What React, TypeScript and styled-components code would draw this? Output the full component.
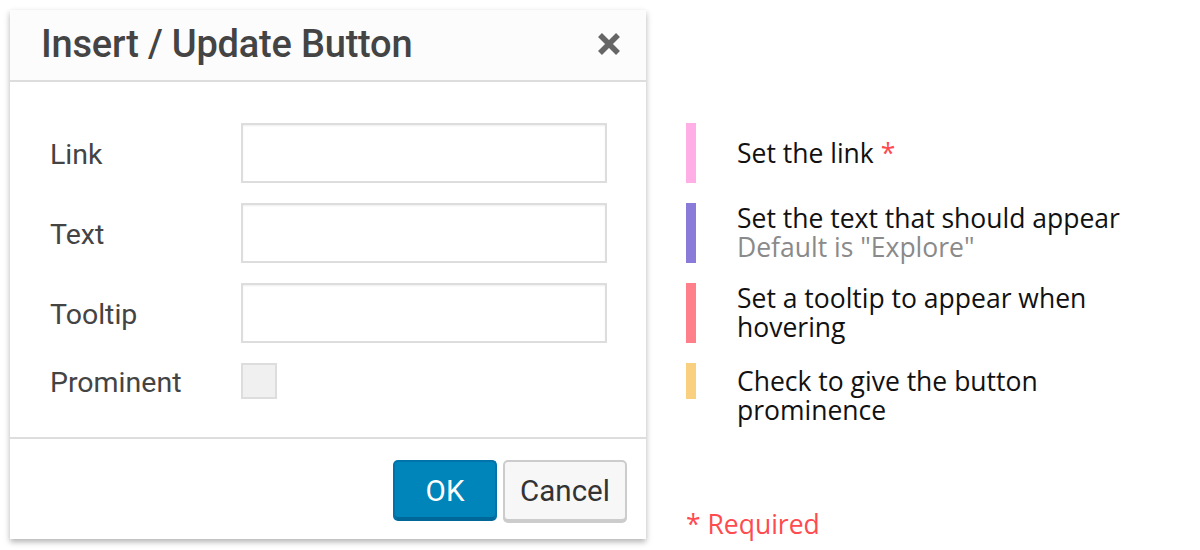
import React from 'react';
import styled, { createGlobalStyle } from 'styled-components';

const GlobalStyle = createGlobalStyle`
  html, body {
    margin: 0;
    padding: 0;
    background: #ffffff;
  }
  * {
    box-sizing: border-box;
  }
`;

const COLORS = {
  text: '#444444',
  border: '#dddddd',
  blue: '#0085ba',
  red: '#ff4a4f',
};

interface FieldSpec {
  label: string;
  kind: 'text' | 'check';
}

interface NoteSpec {
  color: string;
  height: number;
  lines: string[];
  sub?: string;
  required?: boolean;
  top?: boolean;
}

const FIELDS: FieldSpec[] = [
  { label: 'Link', kind: 'text' },
  { label: 'Text', kind: 'text' },
  { label: 'Tooltip', kind: 'text' },
  { label: 'Prominent', kind: 'check' },
];

const NOTES: NoteSpec[] = [
  { color: '#ffaee6', height: 60, lines: ['Set the link'], required: true },
  { color: '#8b7bd8', height: 60, lines: ['Set the text that should appear'], sub: 'Default is "Explore"' },
  { color: '#ff7f8a', height: 60, lines: ['Set a tooltip to appear when', 'hovering'] },
  { color: '#f9d07f', height: 36, lines: ['Check to give the button', 'prominence'], top: true },
];

const CloseIcon = () => (
  <svg width="26" height="26" viewBox="0 0 26 26">
    <path d="M4 4 L22 22 M22 4 L4 22" stroke="#666" strokeWidth="5.5" strokeLinecap="butt" />
  </svg>
);

const App = () => (
  <Page>
    <GlobalStyle />
    <Dialog>
      <Header>
        <Title>Insert / Update Button</Title>
        <Close>
          <CloseIcon />
        </Close>
      </Header>
      <Body>
        {FIELDS.map((f) => (
          <FieldRow key={f.label} $short={f.kind === 'check'}>
            <Label>{f.label}</Label>
            {f.kind === 'text' ? <TextInput type="text" /> : <CheckBox />}
          </FieldRow>
        ))}
      </Body>
      <Footer>
        <PrimaryButton>OK</PrimaryButton>
        <SecondaryButton>Cancel</SecondaryButton>
      </Footer>
    </Dialog>

    <Notes>
      <NoteList>
        {NOTES.map((n) => (
          <NoteRow key={n.color} $top={n.top} $height={n.height}>
            <Bar $color={n.color} $height={n.height} />
            <NoteText $top={n.top}>
              {n.lines.map((l, i) => (
                <div key={i}>
                  {l}
                  {n.required && i === n.lines.length - 1 && <Star> *</Star>}
                </div>
              ))}
              {n.sub && <SubText>{n.sub}</SubText>}
            </NoteText>
          </NoteRow>
        ))}
      </NoteList>
      <Required>* Required</Required>
    </Notes>
  </Page>
);

export default App;

const Page = styled.div`
  width: 1200px;
  height: 550px;
  padding: 10px 0 0 10px;
  display: flex;
  align-items: flex-start;
  gap: 40px;
  overflow: hidden;
`;

const Dialog = styled.div`
  width: 636px;
  height: 529px;
  background: #ffffff;
  box-shadow: 0 3px 6px rgba(0, 0, 0, 0.3);
  display: flex;
  flex-direction: column;
`;

const Header = styled.div`
  height: 72px;
  flex-shrink: 0;
  background: #fcfcfc;
  border-bottom: 2px solid ${COLORS.border};
  display: flex;
  align-items: center;
  justify-content: space-between;
  padding: 0 24px 0 31px;
`;

const Title = styled.div`
  font-family: Roboto, 'Liberation Sans', sans-serif;
  font-weight: 500;
  font-size: 38px;
  color: ${COLORS.text};
  letter-spacing: -0.2px;
  margin-top: -2px;
`;

const Close = styled.div`
  display: flex;
  align-items: center;
  justify-content: center;
  width: 26px;
  height: 26px;
  margin-top: -2px;
  cursor: pointer;
`;

const Body = styled.div`
  flex: 1;
  padding: 41px 39px 0 40px;
  display: flex;
  flex-direction: column;
  gap: 20px;
  border-bottom: 2px solid ${COLORS.border};
`;

const FieldRow = styled.div<{ $short?: boolean }>`
  display: flex;
  align-items: center;
  height: ${(p) => (p.$short ? 36 : 60)}px;
`;

const Label = styled.div`
  width: 191px;
  padding-top: 3px;
  font-family: Roboto, 'Liberation Sans', sans-serif;
  font-size: 28.5px;
  color: ${COLORS.text};
`;

const TextInput = styled.input`
  width: 366px;
  height: 60px;
  border: 2px solid ${COLORS.border};
  box-shadow: inset 0 1px 2px rgba(0, 0, 0, 0.07);
  background: #ffffff;
  outline: none;
  padding: 0 12px;
  font-size: 24px;
`;

const CheckBox = styled.div`
  width: 36px;
  height: 36px;
  border: 2px solid ${COLORS.border};
  background: #f0f0f0;
`;

const Footer = styled.div`
  height: 100px;
  flex-shrink: 0;
  display: flex;
  justify-content: flex-end;
  align-items: flex-start;
  gap: 6px;
  padding: 21px 19px 0 0;
`;

const buttonBase = `
  height: 61px;
  border-radius: 5px;
  font-family: Roboto, 'Liberation Sans', sans-serif;
  font-size: 29.5px;
  display: flex;
  align-items: center;
  justify-content: center;
  cursor: pointer;
`;

const PrimaryButton = styled.div`
  ${buttonBase}
  width: 104px;
  background: ${COLORS.blue};
  border: 2px solid #0073aa;
  border-bottom-color: #006799;
  box-shadow: inset 0 -2px 0 #006799;
  color: #ffffff;
`;

const SecondaryButton = styled.div`
  ${buttonBase}
  width: 124px;
  background: #f7f7f7;
  border: 2px solid #cccccc;
  box-shadow: 0 2px 0 #cccccc;
  color: #333333;
`;

const Notes = styled.div`
  display: flex;
  flex-direction: column;
  padding-top: 113px;
  font-family: 'Open Sans', 'Noto Sans', sans-serif;
  font-size: 26.5px;
  line-height: 29px;
  color: #111111;
`;

const NoteList = styled.div`
  display: flex;
  flex-direction: column;
  gap: 20px;
`;

const NoteRow = styled.div<{ $top?: boolean; $height: number }>`
  display: flex;
  align-items: ${(p) => (p.$top ? 'flex-start' : 'center')};
  gap: 41px;
  height: ${(p) => p.$height}px;
`;

const Bar = styled.div<{ $color: string; $height: number }>`
  width: 10px;
  flex-shrink: 0;
  align-self: flex-start;
  height: ${(p) => p.$height}px;
  background: ${(p) => p.$color};
`;

const NoteText = styled.div<{ $top?: boolean }>`
  padding-top: ${(p) => (p.$top ? 4 : 0)}px;
  white-space: nowrap;
`;

const Star = styled.span`
  color: ${COLORS.red};
`;

const SubText = styled.div`
  color: #8a8a8a;
`;

const Required = styled.div`
  margin-top: 111px;
  color: ${COLORS.red};
`;
